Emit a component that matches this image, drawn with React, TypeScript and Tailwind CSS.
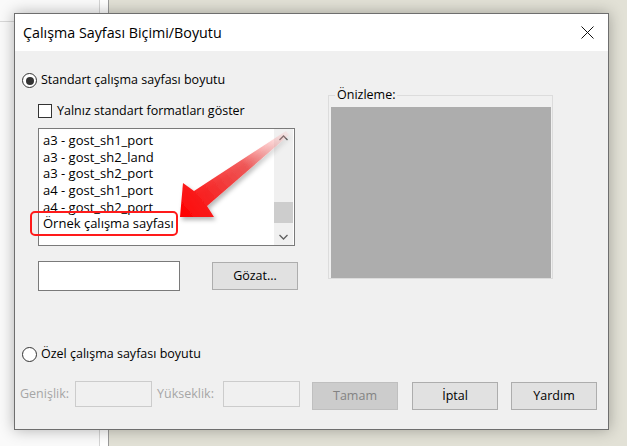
import React from 'react';

const font = 'font-["Open_Sans","Noto_Sans",sans-serif]';

const listItems = [
  'a3 - gost_sh1_port',
  'a3 - gost_sh2_land',
  'a3 - gost_sh2_port',
  'a4 - gost_sh1_port',
  'a4 - gost_sh2_port',
  'Örnek çalışma sayfası',
];

const Radio = ({ checked }: { checked?: boolean }) => (
  <div className="w-[15px] h-[15px] rounded-full border border-[#333] bg-white flex items-center justify-center shrink-0">
    {checked && <div className="w-[8px] h-[8px] rounded-full bg-[#333]" />}
  </div>
);

const Chevron = ({ up }: { up?: boolean }) => (
  <svg width="9" height="6" viewBox="0 0 9 6">
    <path d={up ? 'M0.5 5 L4.5 1 L8.5 5' : 'M0.5 1 L4.5 5 L8.5 1'} fill="none" stroke="#606060" strokeWidth="1.3" />
  </svg>
);

// callout arrow pointing at the highlighted list entry
const Arrow = () => (
  <svg className="absolute left-0 top-0 pointer-events-none" width="627" height="446" viewBox="0 0 627 446">
    <defs>
      <linearGradient id="arrowFill" x1="288" y1="132" x2="181" y2="216" gradientUnits="userSpaceOnUse">
        <stop offset="0" stopColor="#ffb0b0" stopOpacity="0.15" />
        <stop offset="0.4" stopColor="#f03a3a" stopOpacity="0.8" />
        <stop offset="1" stopColor="#ff0000" stopOpacity="1" />
      </linearGradient>
      <filter id="arrowShadow" x="-20%" y="-20%" width="140%" height="140%">
        <feDropShadow dx="2" dy="3" stdDeviation="2" floodColor="#000" floodOpacity="0.3" />
      </filter>
    </defs>
    <polygon
      points="180,217 183,183 194,191 286,131 289,135 207,206 214,217"
      fill="url(#arrowFill)"
      filter="url(#arrowShadow)"
    />
  </svg>
);

const App = () => {
  return (
    <div className={`relative w-[627px] h-[446px] overflow-hidden flex bg-[#e2e1d6] ${font}`}>
      <div className="w-[100px] bg-[#fafafa] border-r border-[#d4d4d4]">
        <div className="h-[22px] border-b border-[#d8d8d8]" />
      </div>
      <div className="w-[9px] bg-white border-r border-[#9a9a9a]" />
      <div className="flex-1 bg-[#e2e1d6]" />

      <div className="absolute left-[14px] top-[13px] w-[595px] h-[417px] border border-[#6e6e6e] bg-[#f0f0f0] shadow-[0_0_14px_rgba(0,0,0,0.3)] flex flex-col">
        <div className="h-[37px] bg-white flex items-center justify-between pl-[8px] pr-[14px]">
          <span className="text-[14.3px] text-black">Çalışma Sayfası Biçimi/Boyutu</span>
          <svg width="13" height="13" viewBox="0 0 13 13">
            <path d="M0.5 0.5 L12.5 12.5 M12.5 0.5 L0.5 12.5" stroke="#111" strokeWidth="1" />
          </svg>
        </div>

        <div className="flex-1 flex flex-col text-[12.5px] text-black">
          <div className="flex items-start mt-[22px]">
            <div className="w-[313px] pl-[7px] flex flex-col">
              <div className="flex items-center h-[15px] gap-[4px]">
                <Radio checked />
                <span>Standart çalışma sayfası boyutu</span>
              </div>
              <div className="flex items-center h-[14px] mt-[16px] ml-[16px] gap-[5px]">
                <div className="w-[14px] h-[14px] border border-[#333] bg-white" />
                <span>Yalnız standart formatları göster</span>
              </div>
              <div className="mt-[10px] ml-[16px] w-[257px] h-[118px] border border-[#7a7a7a] bg-white flex">
                <div className="flex-1 pl-[4px] pt-[3px] text-[13px]">
                  {listItems.map((item, i) => (
                    <div key={i} className="h-[16.7px] leading-[16.7px] whitespace-nowrap">
                      {i === listItems.length - 1 ? (
                        <span className="relative">
                          {item}
                          <span className="absolute left-[-13px] right-[-4px] top-[-3px] bottom-[-4px] border-2 border-[#ff1a1a] rounded-[5px]" />
                        </span>
                      ) : (
                        item
                      )}
                    </div>
                  ))}
                </div>
                <div className="w-[19px] mr-[1px] bg-[#f0f0f0] flex flex-col">
                  <div className="h-[17px] flex items-center justify-center">
                    <Chevron up />
                  </div>
                  <div className="mt-[56px] h-[21px] bg-[#cdcdcd]" />
                  <div className="flex-1" />
                  <div className="h-[17px] flex items-center justify-center">
                    <Chevron />
                  </div>
                </div>
              </div>
              <div className="flex items-start mt-[15px] ml-[16px]">
                <div className="w-[142px] h-[30px] border border-[#7a7a7a] bg-white" />
                <div className="ml-[32px] mt-[1px] w-[86px] h-[28px] border border-[#adadad] bg-[#e1e1e1] flex items-center justify-center">
                  Gözat...
                </div>
              </div>
            </div>

            <div className="relative mt-[22px] w-[225px] h-[184px] border border-[#dcdcdc] pt-[11px] pl-[2px] pr-[1px]">
              <span className="absolute left-[6px] top-[-10px] bg-[#f0f0f0] px-[2px] leading-[18px]">Önizleme:</span>
              <div className="h-[171px] bg-[#adadad]" />
            </div>
          </div>

          <div className="flex items-center h-[15px] gap-[4px] mt-[56px] pl-[7px]">
            <Radio />
            <span>Özel çalışma sayfası boyutu</span>
          </div>

          <div className="flex items-start mt-[19px] pl-[5px]">
            <span className="w-[55px] h-[25px] leading-[25px] text-[#a6a6a6]">Genişlik:</span>
            <div className="w-[77px] h-[26px] border border-[#cccccc] bg-[#f0f0f0]" />
            <span className="ml-[5px] w-[66px] h-[25px] leading-[25px] text-[#a6a6a6]">Yükseklik:</span>
            <div className="w-[77px] h-[26px] border border-[#cccccc] bg-[#f0f0f0]" />
            <div className="ml-[12px] mt-[1px] w-[86px] h-[28px] border border-[#bfbfbf] bg-[#cccccc] text-[#838383] flex items-center justify-center">
              Tamam
            </div>
            <div className="ml-[14px] mt-[1px] w-[86px] h-[28px] border border-[#adadad] bg-[#e1e1e1] flex items-center justify-center">
              İptal
            </div>
            <div className="ml-[13px] mt-[1px] w-[86px] h-[28px] border border-[#adadad] bg-[#e1e1e1] flex items-center justify-center">
              Yardım
            </div>
          </div>
        </div>
      </div>

      <Arrow />
    </div>
  );
};

export default App;
